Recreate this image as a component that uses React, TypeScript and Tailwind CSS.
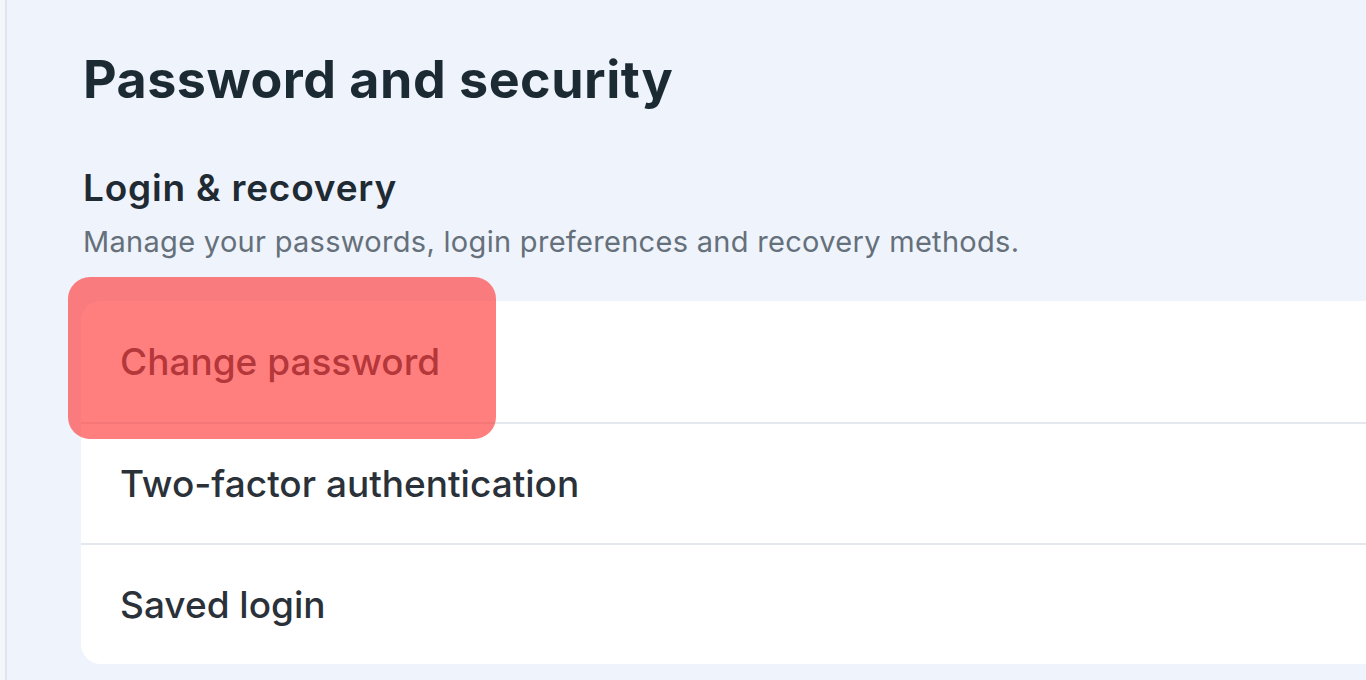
export default function App() {
  const rows = ["Change password", "Two-factor authentication", "Saved login"]
  return (
    <div className="h-[680px] w-[1366px] overflow-hidden bg-[#eef3fc] font-['Inter','Noto_Sans',sans-serif]">
      <div className="flex h-full">
        <div className="w-[5px] bg-[#f3f6fb]" />
        <div className="w-[2px] bg-[#dfe4ee]" />
        <div className="flex-1 pl-[76px] pt-[50px]">
          <h1 className="text-[52px] font-bold leading-[60px] tracking-[0.5px] text-[#1c2b33]">Password and security</h1>
          <h2 className="mt-[56px] text-[37px] font-semibold leading-[44px] tracking-[0.8px] text-[#1f2a33]">Login &amp; recovery</h2>
          <p className="mt-[14px] text-[29px] leading-[36px] tracking-[0.3px] text-[#65707a]">Manage your passwords, login preferences and recovery methods.</p>
          <div className="relative -ml-[2px] mt-[41px]">
            <div className="-mr-[20px] overflow-hidden rounded-[20px] bg-white">
              {rows.map((r, i) => (
                <div key={r} className={"flex h-[121px] items-center pl-[39px] text-[37px] font-medium text-[#2a3139] " + (i > 0 ? "border-t-2 border-[#e4e7ec]" : "")}>
                  {r}
                </div>
              ))}
            </div>
            <div className="absolute -left-[13px] -top-[24px] h-[162px] w-[428px] rounded-[22px] bg-[#ff3b3b]/65" />
          </div>
        </div>
      </div>
    </div>
  )
}
